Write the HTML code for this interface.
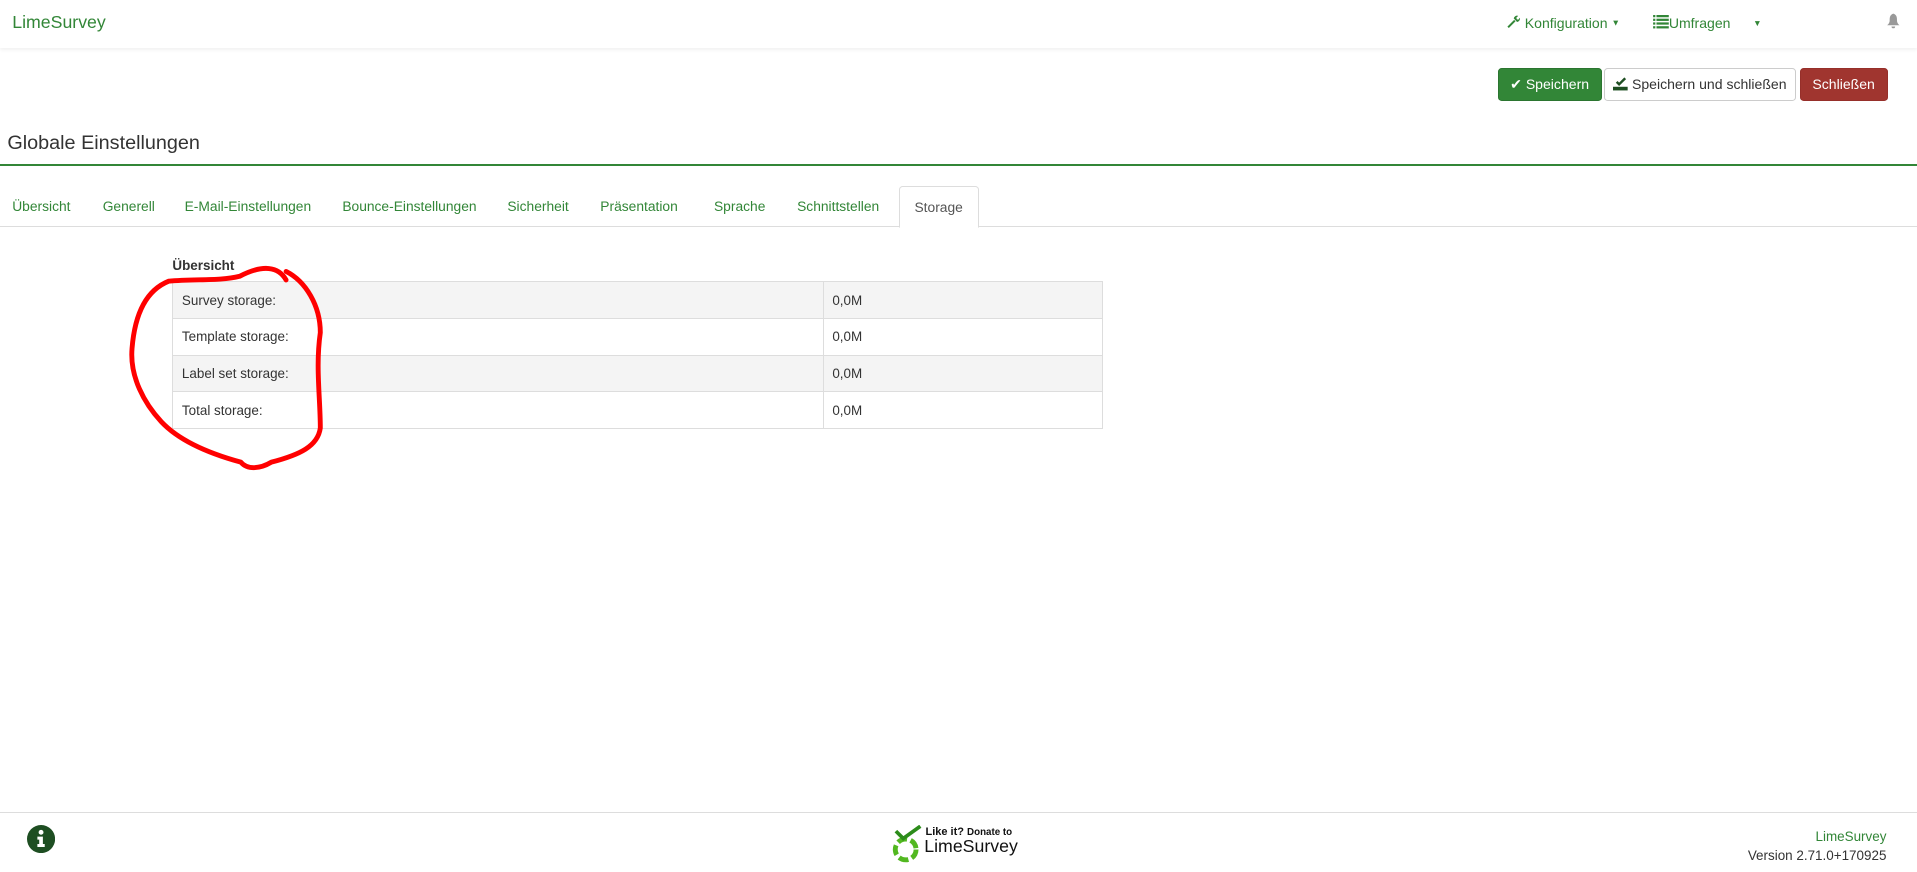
<!DOCTYPE html>
<html><head><meta charset="utf-8"><style>
html,body{margin:0;padding:0;background:#fff;}
body{width:1568px;height:713px;zoom:1.22258;position:relative;overflow:hidden;font-family:"Liberation Sans",sans-serif;color:#333;}
.a{position:absolute;white-space:nowrap;}
.g{color:#328637;}
.nav{position:absolute;left:0;top:0;width:1568px;height:39px;background:#fff;box-shadow:0 2px 3px rgba(0,0,0,.06);}
.btn{position:absolute;top:56px;height:27px;box-sizing:border-box;border-radius:3px;font-size:11.5px;line-height:26px;text-align:center;}
.tab{position:absolute;top:162px;font-size:11.3px;color:#328637;}
table{position:absolute;left:141px;top:230px;width:761px;border-collapse:collapse;font-size:11px;color:#333;}
td{border:1px solid #ddd;height:30px;padding:0 0 0 7px;box-sizing:border-box;}
tr:nth-child(odd) td{background:#f4f4f4;}
</style></head><body>
<div class="nav"></div>
<div class="a g" style="left:10px;top:10px;font-size:14.5px;">LimeSurvey</div>
<div class="a g" style="left:1233px;top:12px;font-size:11.5px;">
<svg width="11" height="11" viewBox="0 0 12 12" style="vertical-align:-1px"><path d="M1 11 L7 5" stroke="#328637" stroke-width="1.8"/><path d="M6 3 A3 3 0 0 1 10 0.8 L8.3 2.5 L8.8 3.8 L10 4.2 L11.5 2.5 A3 3 0 0 1 9 6.2 Z" fill="#328637"/></svg> Konfiguration <span style="font-size:7px;vertical-align:2px">▼</span></div>
<div class="a g" style="left:1352px;top:12px;font-size:11.5px;">
<svg width="13" height="11" viewBox="0 0 14 12" style="vertical-align:-1px"><g fill="#328637"><rect x="0" y="0" width="2" height="2"/><rect x="3" y="0" width="11" height="2"/><rect x="0" y="3.3" width="2" height="2"/><rect x="3" y="3.3" width="11" height="2"/><rect x="0" y="6.6" width="2" height="2"/><rect x="3" y="6.6" width="11" height="2"/><rect x="0" y="10" width="2" height="2"/><rect x="3" y="10" width="11" height="2"/></g></svg>Umfragen</div>
<div class="a g" style="left:1434px;top:15px;font-size:7px;">▼</div>
<svg class="a" style="left:1543px;top:11px" width="12" height="13" viewBox="0 0 12 13"><path d="M6 0.5 C3 1.5 3 4 3 6 C3 8 2 9 1 10 L11 10 C10 9 9 8 9 6 C9 4 9 1.5 6 0.5 Z M4.5 11 A1.5 1.5 0 0 0 7.5 11 Z" fill="#999"/></svg>

<div class="btn" style="left:1225px;width:85px;background:#328637;color:#fff;border:1px solid #2b7530;">✔ Speichern</div>
<div class="btn" style="left:1312px;width:157px;background:#fff;color:#333;border:1px solid #ccc;"><svg width="12" height="11" viewBox="0 0 12 11" style="vertical-align:-1px"><path d="M3 4 L5 6 L10 1" stroke="#1e4e22" stroke-width="2" fill="none"/><rect x="0" y="8" width="12" height="3" fill="#1e4e22"/></svg> Speichern und schließen</div>
<div class="btn" style="left:1472px;width:72px;background:#a0352f;color:#fff;border:1px solid #962f2a;">Schließen</div>

<div class="a" style="left:6px;top:108px;font-size:16.2px;color:#333;">Globale Einstellungen</div>
<div class="a" style="left:0;top:134px;width:1568px;height:2px;background:#328637;"></div>

<div class="a" style="left:0;top:185px;width:1568px;height:1px;background:#ddd;"></div>
<div class="a" style="left:735px;top:152px;width:64px;height:33px;border:1px solid #ddd;border-bottom:1px solid #fff;border-radius:3px 3px 0 0;background:#fff;"></div>
<div class="tab" style="left:10px">Übersicht</div>
<div class="tab" style="left:84px">Generell</div>
<div class="tab" style="left:151px">E-Mail-Einstellungen</div>
<div class="tab" style="left:280px">Bounce-Einstellungen</div>
<div class="tab" style="left:415px">Sicherheit</div>
<div class="tab" style="left:491px">Präsentation</div>
<div class="tab" style="left:584px">Sprache</div>
<div class="tab" style="left:652px">Schnittstellen</div>
<div class="tab" style="left:748px;top:163px;color:#555">Storage</div>

<div class="a" style="left:141px;top:211px;font-size:11px;font-weight:bold;color:#333;">Übersicht</div>
<table>
<tr><td style="width:532px">Survey storage:</td><td>0,0M</td></tr>
<tr><td>Template storage:</td><td>0,0M</td></tr>
<tr><td>Label set storage:</td><td>0,0M</td></tr>
<tr><td>Total storage:</td><td>0,0M</td></tr>
</table>
<svg class="a" style="left:0;top:0" width="400" height="400"><path d="M234 229 C228 218 215 216 196 226 C180 230 160 228 138 230 C118 238 110 260 108 285 C106 308 118 330 132 345 C148 362 175 372 197 378 C202 384 212 384 222 378 C245 372 260 365 262 350 C262 325 258 300 262 272 C262 250 250 230 234 222" stroke="#f00" stroke-width="4" fill="none" stroke-linecap="round"/></svg>

<div class="a" style="left:0;top:664px;width:1568px;height:1px;background:#ddd;"></div>
<svg class="a" style="left:22px;top:675px" width="23" height="23" viewBox="0 0 23 23"><circle cx="11.5" cy="11.5" r="11.5" fill="#1e4e22"/><circle cx="11.5" cy="6" r="2" fill="#fff"/><path d="M8.5 9.5 H13 V15.5 H14.5 V18 H8.5 V15.5 H10 V12 H8.5 Z" fill="#fff"/></svg>
<svg class="a" style="left:729px;top:675px" width="28" height="32" viewBox="0 0 28 32"><circle cx="12" cy="20" r="8.5" stroke="#52b820" stroke-width="4" fill="none" stroke-dasharray="8 3"/><path d="M4 5 L10 11 L24 1" stroke="#2c8c1a" stroke-width="3" fill="none"/></svg>
<div class="a" style="left:757px;top:676px;font-size:9px;font-weight:bold;color:#111;">Like it? <span style="font-size:8px">Donate to</span></div>
<div class="a" style="left:756px;top:684px;font-size:14.5px;color:#111;">LimeSurvey</div>
<div class="a g" style="right:25px;top:678px;font-size:11px;">LimeSurvey</div>
<div class="a" style="right:25px;top:694px;font-size:11px;color:#333;">Version 2.71.0+170925</div>
</body></html>
